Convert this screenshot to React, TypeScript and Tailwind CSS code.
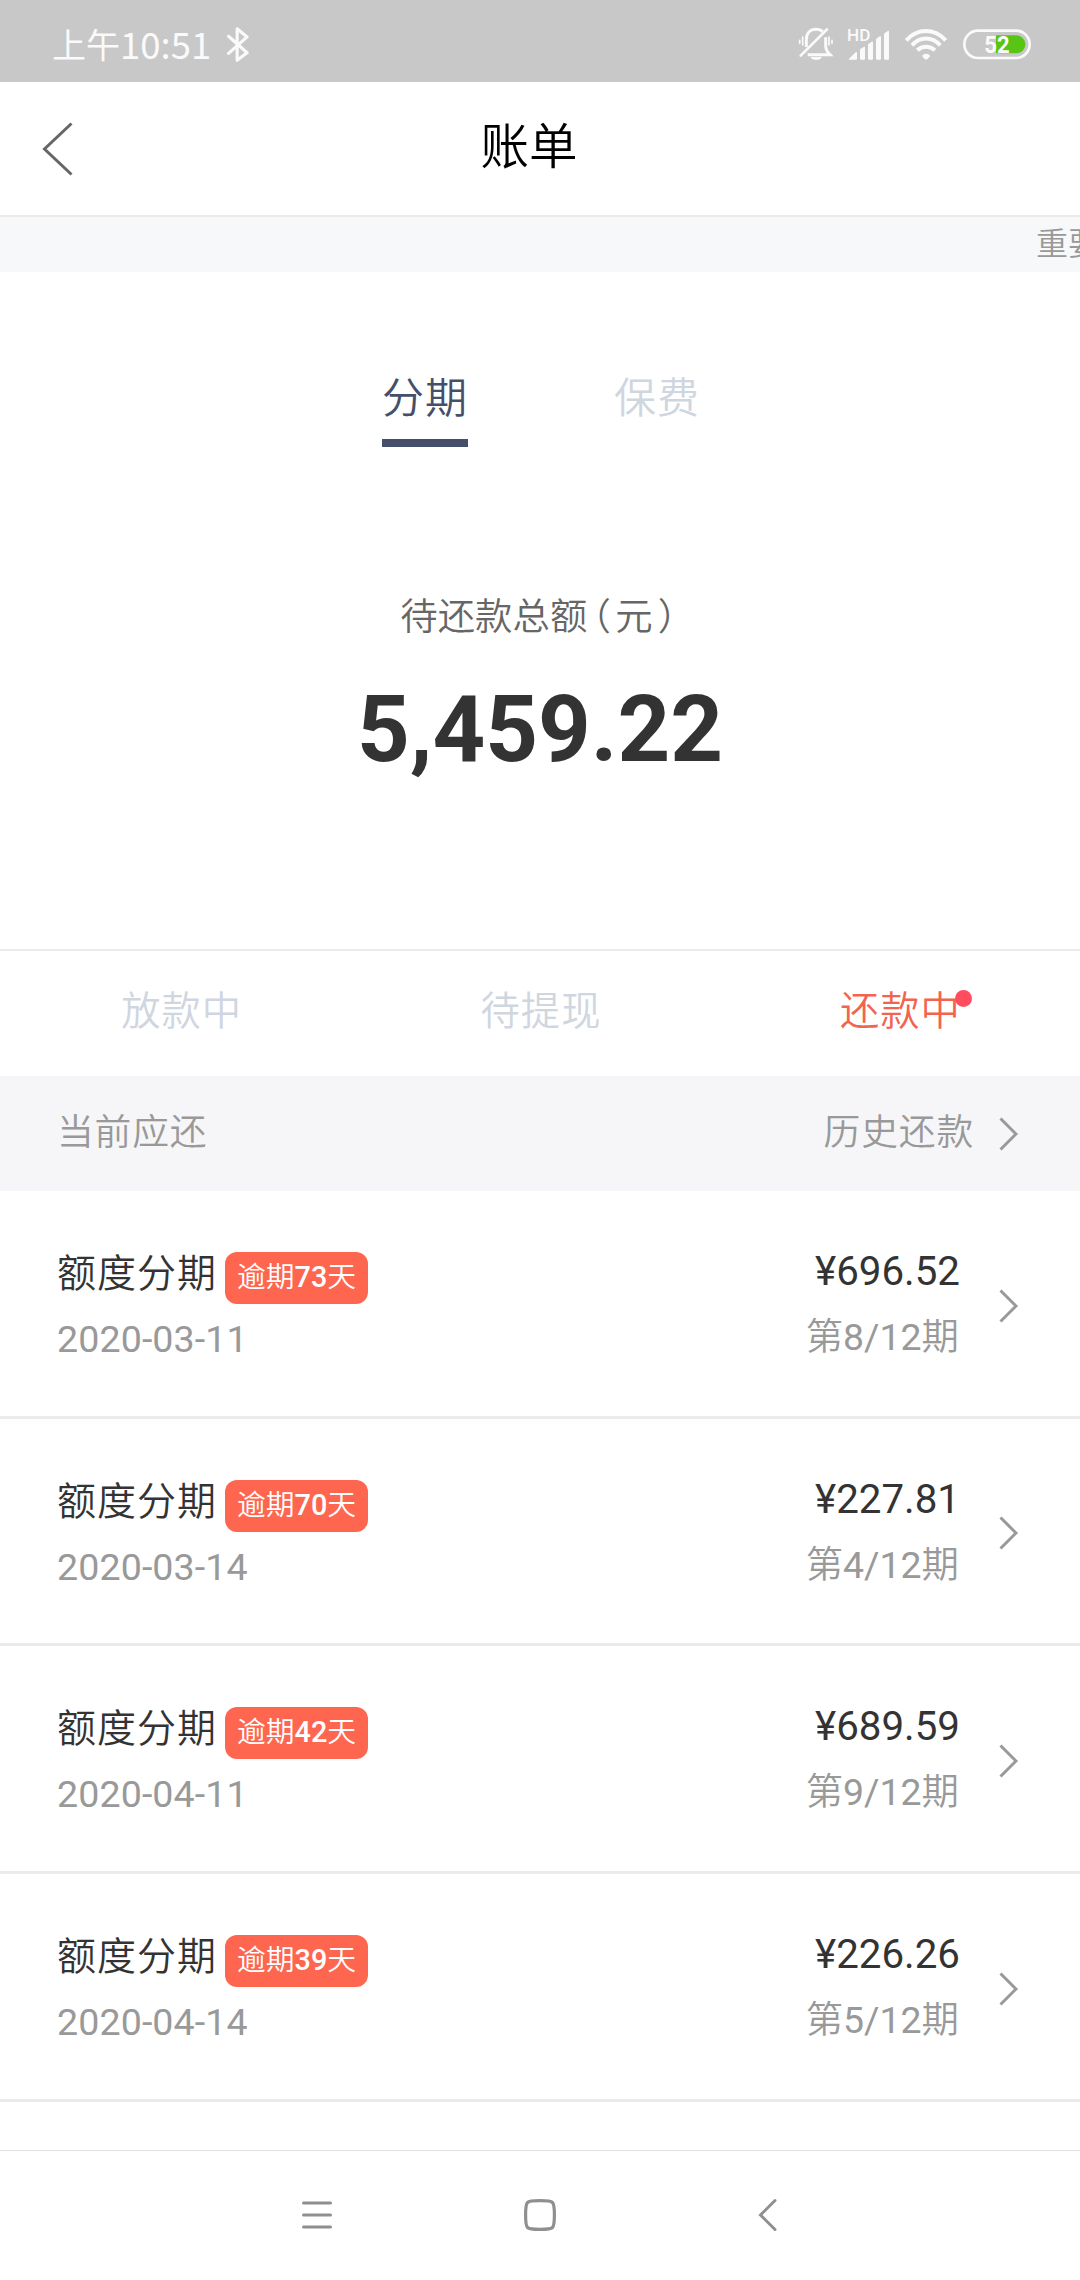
import React from 'react';

interface Bill {
  name: string;
  overdue: number;
  date: string;
  amount: string;
  period: string;
}

const bills: Bill[] = [
  { name: '额度分期', overdue: 73, date: '2020-03-11', amount: '696.52', period: '8/12' },
  { name: '额度分期', overdue: 70, date: '2020-03-14', amount: '227.81', period: '4/12' },
  { name: '额度分期', overdue: 42, date: '2020-04-11', amount: '689.59', period: '9/12' },
  { name: '额度分期', overdue: 39, date: '2020-04-14', amount: '226.26', period: '5/12' },
];

const BluetoothIcon: React.FC = () => (
  <svg className="h-[35px] w-[22px]" viewBox="0 0 63 102" fill="none" stroke="#fafafa" strokeWidth="9" strokeLinejoin="round" strokeLinecap="round">
    <path d="M4 27L58 75L29 97V5L58 29L4 77" />
  </svg>
);

const MutedBellIcon: React.FC = () => (
  <svg className="h-[34px] w-[36px]" viewBox="114 81 108 102" fill="none" stroke="#fafafa" strokeWidth="9">
    <path d="M139 141V120C139 99 151 88 168 88C176 88 183 90 188 95" />
    <path d="M197 112V138C197 151 203 157 210 164H143" />
    <path d="M122 167L201 88" strokeWidth="8" strokeLinecap="round" />
    <path d="M151 171H186C181 183 157 183 151 171Z" fill="#fafafa" stroke="none" />
    <path d="M119 121V130M128 111V135M207 111V135M216 121V130" strokeWidth="5" strokeLinecap="round" />
  </svg>
);

const SignalIcon: React.FC = () => (
  <svg className="h-[49px] w-[43px]" viewBox="261 55 129 147" fill="#fafafa">
    <text x="261" y="117" fontSize="47" fontFamily="Roboto, sans-serif" fontWeight="500" textLength="70" lengthAdjust="spacingAndGlyphs">HD</text>
    <path d="M267 171L287 152Q291 149 291 154V171Q291 174 288 174H269Q264 174 267 171Z" />
    <path d="M300 143L311 136Q315 134 315 138V171Q315 174 312 174H303Q300 174 300 171Z" />
    <path d="M324 128L335 120Q339 118 339 122V171Q339 174 336 174H327Q324 174 324 171Z" />
    <path d="M348 112L359 104Q363 102 363 106V171Q363 174 360 174H351Q348 174 348 171Z" />
    <path d="M372 96L383 88Q387 86 387 90V171Q387 174 384 174H375Q372 174 372 171Z" />
  </svg>
);

const WifiIcon: React.FC = () => (
  <svg className="h-[32px] w-[42px]" viewBox="435 83 126 96" fill="none" stroke="#fafafa" strokeWidth="12">
    <path d="M439 120C472 83 524 83 557 120" />
    <path d="M456 135C480 108 516 108 541 135" />
    <path d="M472 150C487 136 509 136 525 150" />
    <path d="M489 163Q498 157 508 163Q513 167 508 171L502 176Q498 179 494 176L489 171Q484 167 489 163Z" fill="#fafafa" stroke="none" />
  </svg>
);

const BatteryIcon: React.FC = () => (
  <svg className="h-[31px] w-[68px]" viewBox="609 86 204 93">
    <rect x="613" y="91" width="196" height="82" rx="41" fill="none" stroke="#fafafa" strokeWidth="8" />
    <path d="M708 105H769A27 27 0 0 1 769 159H708Z" fill="#58c416" />
    <text x="673" y="158" fontSize="72" fontFamily="Roboto, sans-serif" fontWeight="700" fill="#fafafa" textLength="76" lengthAdjust="spacingAndGlyphs">52</text>
  </svg>
);

const ArrowRight: React.FC = () => (
  <svg className="h-[36px] w-[20px]" viewBox="0 0 20 36" fill="none" stroke="#999" strokeWidth="3">
    <path d="M1.5 2.5L17 18L1.5 33.5" />
  </svg>
);

const StatusBar: React.FC = () => (
  <div className="flex h-[82px] items-center justify-between bg-[#c8c8c8] pt-[6px] pr-[49px] pl-[52px] text-[#fafafa]">
    <div className="flex items-center">
      <span className="pt-[3px] text-[34px] leading-none">上午</span>
      <span className="font-['Noto_Sans_CJK_SC'] text-[36.5px] leading-none">10:51</span>
      <span className="ml-[16px]">
        <BluetoothIcon />
      </span>
    </div>
    <div className="flex items-center">
      <MutedBellIcon />
      <span className="ml-[13px]"><SignalIcon /></span>
      <span className="ml-[15px]"><WifiIcon /></span>
      <span className="ml-[16px]"><BatteryIcon /></span>
    </div>
  </div>
);

const BillRow: React.FC<{ bill: Bill }> = ({ bill }) => (
  <li className="flex h-[227.67px] border-b-3 border-[#ebebeb] pr-[61px] pl-[57px]">
    <div className="flex-1 pt-[59px]">
      <div className="flex h-[59px] items-start">
        <span className="text-[39px] leading-[48px] font-[350] tracking-[1px] text-[#333]">{bill.name}</span>
        <span className="mt-[2px] ml-[8px] flex h-[52px] w-[143px] items-center justify-center rounded-[12px] bg-[#ff6650] pb-[1px] text-[28.8px] leading-none font-[350] text-white">
          逾期<b className="font-medium">{bill.overdue}</b>天
        </span>
      </div>
      <p className="mt-[8px] text-[37.6px] leading-[44px] tracking-[0.1px] text-[#999]">{bill.date}</p>
    </div>
    <div className="pt-[57px] text-right">
      <p className="-mr-px text-[40.3px] leading-[48px] text-[#333]">¥{bill.amount}</p>
      <p className="mt-[19px] text-[37.4px] leading-[44px] font-[350] text-[#999]">
        第<span className="font-normal">{bill.period}</span>期
      </p>
    </div>
    <div className="ml-[40px] flex items-center pt-[5px]">
      <ArrowRight />
    </div>
  </li>
);

const App: React.FC = () => {
  return (
    <div className="flex h-[2280px] w-[1080px] flex-col overflow-hidden bg-white font-[Roboto,'Noto_Sans_CJK_SC',sans-serif]">
      <StatusBar />

      <header className="grid h-[135px] grid-cols-3 items-center border-b-2 border-[#ebebeb]">
        <svg className="ml-[42px] h-[54px] w-[32px]" viewBox="0 0 32 54" fill="none" stroke="#666" strokeWidth="3">
          <path d="M29.5 1.5L2.5 27L29.5 52.5" />
        </svg>
        <h1 className="pr-[22px] text-center text-[48.5px] leading-none font-[350] text-black">账单</h1>
      </header>

      <div className="flex h-[55px] items-center justify-end overflow-hidden bg-[#f7f8fa] pb-[2px]">
        <span className="w-[44px] text-[32px] leading-none font-[350] whitespace-nowrap text-[#999]">重要</span>
      </div>

      <section className="flex h-[677px] flex-col items-center">
        <nav className="mt-[92px] ml-[2px] flex gap-[146px] text-[42px] leading-[69px] font-[350] tracking-[1px]">
          <span className="h-[83px] border-b-8 border-[#464f69] text-[#464f69]">分期</span>
          <span className="text-[#d0d6df]">保费</span>
        </nav>
        <p className="mt-[145px] ml-[1px] flex text-[37.4px] leading-[50px] font-[350] whitespace-nowrap text-[#666]">
          待还款总额
          <span className="ml-[5px] w-[23px] [font-feature-settings:'halt']">（</span>
          元
          <span className="ml-[5px] w-[23px] [font-feature-settings:'halt']">）</span>
        </p>
        <p className="mt-[33px] text-[92px] leading-[110px] font-bold text-[#333]">5,459.22</p>
      </section>

      <nav className="grid h-[127px] grid-cols-3 border-t-2 border-[#ebebeb] pt-[31px] pl-[2px] text-center text-[39.3px] leading-[60px] font-[350] tracking-[1px] text-[#d0d6df]">
        <span>放款中</span>
        <span>待提现</span>
        <span className="text-[#f26450]">
          <span className="relative">
            还款中
            <i className="absolute top-[1px] -right-[11px] size-[17px] rounded-full bg-[#ff4d5e]" />
          </span>
        </span>
      </nav>

      <div className="flex h-[115px] items-center bg-[#f6f6f8] pr-[61px] pl-[57px] text-[36.8px] leading-none font-[350] tracking-[0.8px] text-[#999]">
        <span className="flex-1">当前应还</span>
        <span className="mr-[25px]">历史还款</span>
        <ArrowRight />
      </div>

      <ul className="flex-1">
        {bills.map((bill) => (
          <BillRow key={bill.date} bill={bill} />
        ))}
      </ul>

      <footer className="flex h-[130px] items-center border-t border-[#e0e0e0] pb-[2px] pl-[300px]">
        <svg className="h-[36px] w-[34px]" viewBox="0 0 34 36" stroke="#8f8f8f" strokeWidth="3" strokeLinecap="round">
          <path d="M3.5 6H30.5M3.5 18H30.5M3.5 30H30.5" />
        </svg>
        <svg className="ml-[188px] h-[36px] w-[36px]" viewBox="0 0 36 36" fill="none" stroke="#8f8f8f" strokeWidth="3.2">
          <path d="M18 3.6C26 3.6 29 4 30.5 5.5S32.4 10 32.4 18S32 29 30.5 30.5S26 32.4 18 32.4S7 32 5.5 30.5S3.6 26 3.6 18S4 7 5.5 5.5S10 3.6 18 3.6Z" />
        </svg>
        <svg className="ml-[200px] h-[36px] w-[20px]" viewBox="0 0 20 36" fill="none" stroke="#8f8f8f" strokeWidth="3" strokeLinecap="round">
          <path d="M17 3.5L2.5 18L17 32.5" />
        </svg>
      </footer>
    </div>
  );
};

export default App;
